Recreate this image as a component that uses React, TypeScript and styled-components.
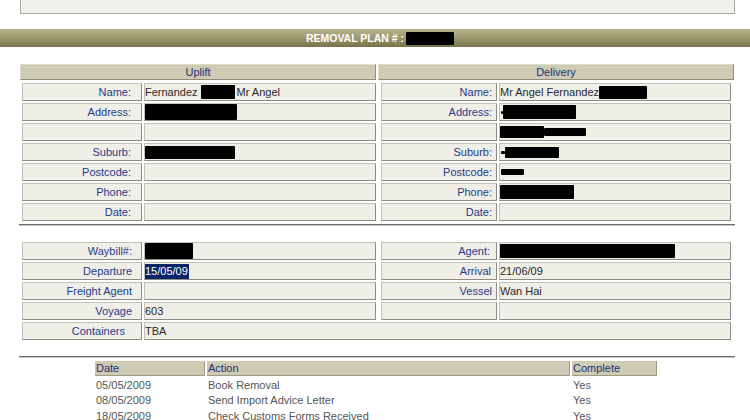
import { Fragment } from 'react';
import styled, { createGlobalStyle } from 'styled-components';

const GlobalStyle = createGlobalStyle`
  body {
    margin: 0;
    background: #fff;
    font-family: "Liberation Sans", Arial, sans-serif;
    font-size: 11px;
  }
`

const Page = styled.div`
  width: 750px;
  height: 420px;
  overflow: hidden;
`
const TopBox = styled.div`
  height: 13px;
  margin: 0 15px 0 20px;
  background: #f1f0ea;
  border: 1px solid #a9a9a2;
  border-top: none;
`
const TitleBar = styled.div`
  margin-top: 15px;
  height: 18px;
  padding-left: 10px;
  background: linear-gradient(#b6b38e, #9d9a6f 50%, #74714a);
  display: flex;
  align-items: center;
  justify-content: center;
  gap: 2px;
  color: #fff;
  font-weight: bold;
  font-size: 10.5px;
`
const AddressArea = styled.div`
  margin: 17px 16px 0 20px;
`
const HeadRow = styled.div`
  display: flex;
  gap: 2px;
`
const PanelHead = styled.div`
  flex: 1;
  height: 14px;
  line-height: 14px;
  text-align: center;
  background: #cdcbb3;
  border: 1px solid;
  border-color: #dedcca #8f8d78 #8f8d78 #dedcca;
  color: #1f2f7a;
`
const FieldGrid = styled.div<{ $mt: number }>`
  display: grid;
  grid-template-columns: 120px 232px 119px 232px;
  grid-auto-rows: 18px;
  column-gap: 2px;
  row-gap: 2px;
  margin: ${p => p.$mt}px 0 0 22px;

  & > :nth-child(4n + 3) {
    margin-left: 3px;
  }
`
const Cell = styled.div<{ $span?: number }>`
  box-sizing: border-box;
  background: #efeee7;
  border: 1px solid;
  border-color: #c2c1b8 #8c8b85 #8c8b85 #c2c1b8;
  display: flex;
  align-items: center;
  white-space: nowrap;
  overflow: hidden;
  grid-column: span ${p => p.$span ?? 1};
`
const Label = styled(Cell)<{ $pr: number }>`
  justify-content: flex-end;
  padding-right: ${p => p.$pr}px;
  color: #263b8a;
`
const Value = styled(Cell)`
  padding-left: 0;
  color: #2a2a2a;
`
const Redact = styled.span<{ $w: number; $h: number; $ml?: number; $mr?: number }>`
  flex-shrink: 0;
  display: inline-block;
  width: ${p => p.$w}px;
  height: ${p => p.$h}px;
  margin-left: ${p => p.$ml ?? 0}px;
  margin-right: ${p => p.$mr ?? 0}px;
  background: #000;
  border-radius: 1px;
`
const Selected = styled.span`
  background: #0a246a;
  color: #fff;
  padding: 1px 1px 2px 0;
`
const Rule = styled.div<{ $mt: number }>`
  margin: ${p => p.$mt}px 15px 0 19px;
  border-top: 1px solid #6e6e6e;
  border-bottom: 1px solid #c4c4c4;
`
const ActionGrid = styled.div`
  display: grid;
  grid-template-columns: 110px 363px 85px;
  grid-auto-rows: 15.5px;
  column-gap: 2px;
  margin: 3px 0 0 95px;
  width: 562px;
`
const ActionHead = styled.div`
  box-sizing: border-box;
  height: 15px;
  padding-left: 1px;
  line-height: 14px;
  background: #cdcbb3;
  border-right: 1px solid #9d9b86;
  border-bottom: 1px solid #9d9b86;
  color: #1f2f7a;
`
const ActionCell = styled.div`
  padding-left: 1px;
  line-height: 16px;
  color: #555;
  white-space: nowrap;
`

const actions = [
  ['05/05/2009', 'Book Removal', 'Yes'],
  ['08/05/2009', 'Send Import Advice Letter', 'Yes'],
  ['18/05/2009', 'Check Customs Forms Received', 'Yes'],
]

export default function App() {
  return (
    <Page>
      <GlobalStyle />
      <TopBox />
      <TitleBar>
        REMOVAL PLAN # :<Redact $w={48} $h={13} />
      </TitleBar>

      <AddressArea>
        <HeadRow>
          <PanelHead>Uplift</PanelHead>
          <PanelHead>Delivery</PanelHead>
        </HeadRow>
      </AddressArea>
      <FieldGrid $mt={3}>
        <Label $pr={10}>Name:</Label>
        <Value>Fernandez<Redact $w={34} $h={14} $ml={3} $mr={2} />Mr Angel</Value>
        <Label $pr={4}>Name:</Label>
        <Value>Mr Angel Fernandez<Redact $w={48} $h={13} /></Value>

        <Label $pr={10}>Address:</Label>
        <Value><Redact $w={92} $h={16} /></Value>
        <Label $pr={4}>Address:</Label>
        <Value><Redact $w={2} $h={3} $ml={1} /><Redact $w={73} $h={14} /></Value>

        <Label $pr={10} />
        <Value />
        <Label $pr={4} />
        <Value><Redact $w={44} $h={12} /><Redact $w={42} $h={8} /></Value>

        <Label $pr={10}>Suburb:</Label>
        <Value><Redact $w={90} $h={13} /></Value>
        <Label $pr={4}>Suburb:</Label>
        <Value><Redact $w={4} $h={3} $ml={1} /><Redact $w={54} $h={11} /></Value>

        <Label $pr={10}>Postcode:</Label>
        <Value />
        <Label $pr={4}>Postcode:</Label>
        <Value><Redact $w={23} $h={6} $ml={1} /></Value>

        <Label $pr={10}>Phone:</Label>
        <Value />
        <Label $pr={4}>Phone:</Label>
        <Value><Redact $w={74} $h={14} /></Value>

        <Label $pr={10}>Date:</Label>
        <Value />
        <Label $pr={4}>Date:</Label>
        <Value />
      </FieldGrid>

      <Rule $mt={3} />

      <FieldGrid $mt={16}>
        <Label $pr={9}>Waybill#:</Label>
        <Value><Redact $w={48} $h={16} /></Value>
        <Label $pr={6}>Agent:</Label>
        <Value><Redact $w={175} $h={14} /></Value>

        <Label $pr={9}>Departure</Label>
        <Value><Selected>15/05/09</Selected></Value>
        <Label $pr={5}>Arrival</Label>
        <Value>21/06/09</Value>

        <Label $pr={9}>Freight Agent</Label>
        <Value />
        <Label $pr={4}>Vessel</Label>
        <Value>Wan Hai</Value>

        <Label $pr={9}>Voyage</Label>
        <Value>603</Value>
        <Label $pr={4} />
        <Value />

        <Label $pr={16}>Containers</Label>
        <Value $span={3}>TBA</Value>
      </FieldGrid>

      <Rule $mt={16} />

      <ActionGrid>
        <ActionHead>Date</ActionHead>
        <ActionHead>Action</ActionHead>
        <ActionHead>Complete</ActionHead>
        {actions.map(([date, action, done]) => (
          <Fragment key={date}>
            <ActionCell>{date}</ActionCell>
            <ActionCell>{action}</ActionCell>
            <ActionCell>{done}</ActionCell>
          </Fragment>
        ))}
      </ActionGrid>
    </Page>
  )
}
